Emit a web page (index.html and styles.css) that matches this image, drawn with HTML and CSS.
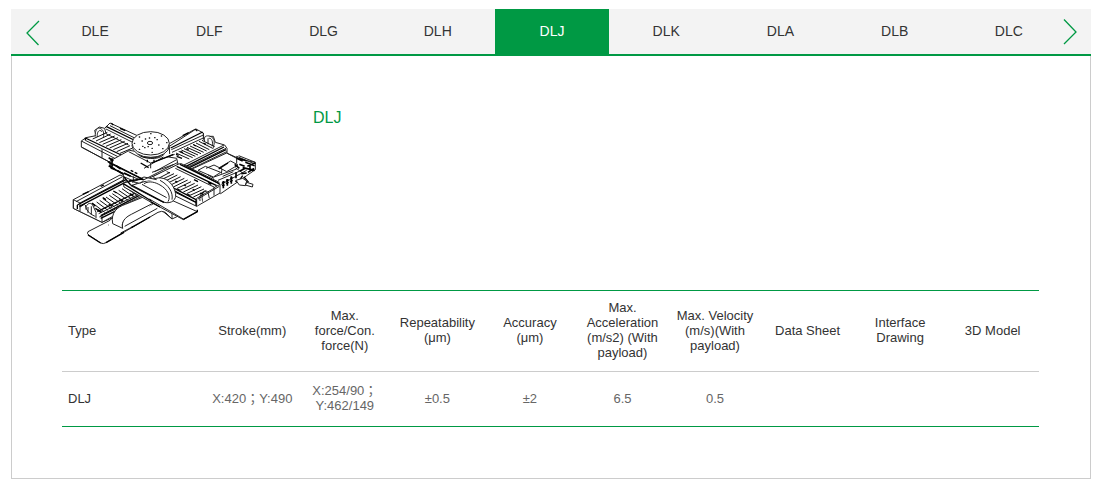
FILE: index.html
```
<!DOCTYPE html>
<html lang="en">
<head>
    <meta charset="UTF-8">
    <meta name="viewport" content="width=device-width, initial-scale=1.0">
    <title>DLJ</title>
    <link rel="stylesheet" href="styles.css">
</head>
<body>
    <!-- Series tabs -->
    <nav class="series-nav">
        <button type="button" class="arrow prev" aria-label="Previous">
            <svg width="16" height="28" viewBox="0 0 16 28"><path d="M14 3L2 15L13.500 27"/></svg>
        </button>
        <ul class="tabs">
            <li><a href="#dle">DLE</a></li>
            <li><a href="#dlf">DLF</a></li>
            <li><a href="#dlg">DLG</a></li>
            <li><a href="#dlh">DLH</a></li>
            <li><a href="#dlj" class="active">DLJ</a></li>
            <li><a href="#dlk">DLK</a></li>
            <li><a href="#dla">DLA</a></li>
            <li><a href="#dlb">DLB</a></li>
            <li><a href="#dlc">DLC</a></li>
        </ul>
        <button type="button" class="arrow next" aria-label="Next">
            <svg width="16" height="28" viewBox="0 0 16 28"><path d="M2 1.500L14 14L2 26"/></svg>
        </button>
    </nav>

    <main class="panel" id="dlj">
        <div class="product">
            <svg class="drawing" viewBox="6 0 630 450" role="img" aria-label="DLJ stage">
                <!-- upper left rail -->
                <path d="M64 108L78 98L108 92L104 76L118 66L134 70L150 54L232 92L260 150L180 195L150 172L64 126Z"/>
                <path d="M64 108L168 162M64 126L150 172M76 106L180 158M150 62L226 100M138 72L218 112M134 70L138 86L206 120M106 94C104 72 116 64 124 72C132 78 132 88 130 98M112 96C110 78 120 72 126 80M126 132V158M150 172V186"/>
                <path class="dark" d="M76 99L190 153M138 64L222 105M154 55L160 60M180 70L196 77M76 98V106"/>
                <path class="thin" d="M98 102L142 82M108 108L152 87M118 113L164 93M128 118L174 98M138 124L184 104M149 129L194 109M160 134L204 115M170 140L210 122M180 145L216 130"/>
                <!-- upper right rail -->
                <path d="M328 124L408 72L430 84L432 104L444 94L460 94L466 112L494 120L501 130V144L396 198L330 170Z"/>
                <path d="M328 116L406 72M334 134L430 90M336 142L432 98M430 84V104M372 180L492 120M384 186L498 130M392 192L500 140M434 108C430 94 440 90 450 94C464 98 466 112 458 132M446 100C456 98 460 112 456 124M444 100V118"/>
                <path class="dark" d="M332 129L428 81M388 188L498 134M368 92L386 83M406 73L412 78M378 184L492 126M350 154L366 160"/>
                <path class="thin" d="M348 144L388 162M356 139L398 158M364 135L406 154M372 131L414 150M381 127L423 146M390 123L431 142M399 118L440 138M408 114L448 134M417 109L456 129M426 106L464 125"/>
                <path class="dark" d="M348 148L356 151M361 139L369 143M379 131L386 134M401 120L408 123M430 114L438 118"/>
                <!-- connector side -->
                <path d="M392 194L500 144L544 164L586 172V194L560 212L482 266L410 230Z"/>
                <path d="M500 144L530 160M414 196L436 184L482 202L460 216ZM438 190L462 180L486 192L484 206M478 188L512 168L534 180L500 200ZM462 216L530 192M474 226L540 198M484 238L560 196M530 154L582 176M530 154V176M536 152L586 172M526 188L548 204M488 214L520 200M444 210L462 220"/>
                <path class="heavy" d="M556 172L584 182M562 184L586 174M548 188L584 196M538 178L554 184M564 202L582 190M540 198L556 190M490 228V250M502 222V242M514 214V236M528 202V220M524 178L538 190M530 160L548 168M570 176V200M544 206L560 204"/>
                <path class="dark" d="M486 234L494 230M486 242L494 240M498 226L506 224M498 236L506 232M510 220L518 218M510 230L518 226M538 160L560 168M476 192L504 174M548 212L534 232M526 228L560 240M552 216L566 232"/>
                <path d="M528 226L548 220L560 228L556 242L538 240ZM560 232L579 238L577 246L556 240Z"/>
                <!-- lower right rail -->
                <path d="M280 214L348 178L364 176L480 238V264L410 304L300 250Z"/>
                <path d="M346 190L462 246M372 180L478 232M320 200L330 204M462 246V272M480 238L462 248M410 304V280L462 250M414 282L478 244M420 288C416 264 436 250 444 262L448 280M432 262C424 264 426 280 428 290M300 240L408 292"/>
                <path class="dark" d="M350 184L470 242M360 178L478 236M300 228L408 284M302 236L408 292M408 284V302M402 224L414 230M444 232L454 238"/>
                <path class="thin" d="M292 222L330 202M300 226L342 206M310 231L352 210M320 236L362 215M330 241L373 220M340 246L383 225M350 251L393 230M360 256L404 235M370 261L414 240M380 266L424 245M390 271L432 252M400 276L438 258"/>
                <path class="dark" d="M346 228L352 232M372 240L378 243M398 253L404 256M352 252L360 256M382 268L390 271M420 264L430 268"/>
                <!-- lower left rail -->
                <path d="M40 284L180 210L270 250L280 284L126 352L40 310Z"/>
                <path d="M40 284L60 294V318M40 284V310M48 290L186 216M60 294L192 224M60 306L76 296M76 300C78 322 100 332 106 334M78 314C76 296 92 290 98 300L108 322V340M84 306V324M94 304V330M116 326L240 266M118 336L244 274M126 330V352M40 310L126 352L238 290"/>
                <path class="dark" d="M52 300L198 224M58 304L200 230M68 268L86 260M122 244L132 240M112 320L238 258M122 332L244 268M96 294L106 304M122 340L244 280M52 300V312M106 310L124 322"/>
                <path class="thin" d="M100 296L134 322M110 291L144 316M119 286L154 311M129 281L164 306M138 276L174 301M148 271L184 296M157 266L194 291M167 261L204 286M176 256L213 281M186 251L222 276M195 246L231 271M204 242L240 266"/>
                <path class="dark" d="M128 278L138 284M160 258L170 264M192 242L202 248M114 314L124 322M146 298L156 304M178 284L188 290M210 266L220 272"/>
                <!-- cable trays -->
                <path d="M310 320L336 342L370 326L340 300Z"/>
                <path d="M150 346L84 380Q80 386 86 390L122 414Q130 418 138 413L294 322Q304 316 316 322L336 342V326L290 290L190 300Z"/>
                <path d="M158 356C152 322 172 306 196 298L250 276L288 292L218 330C190 344 184 352 188 370Z"/>
                <path d="M188 370C184 350 194 338 214 328L284 292M194 364L292 310M182 384L220 364"/>
                <path class="dark" d="M84 390L122 414M138 413L192 382M214 368L270 336M146 360H147M184 385H185"/>
                <path d="M190 234L216 228L300 270L412 320L370 344L270 290L192 246Z"/>
                <path d="M232 236L288 220C330 210 352 260 346 278C340 294 322 296 306 290L212 242Z"/>
                <path d="M252 236C268 226 286 232 300 240C322 252 334 274 324 290M246 238L320 278M300 226C326 240 340 262 336 284M268 282L370 342"/>
                <path class="dark" d="M190 236L274 288M214 240L312 292M272 290L300 306M370 343L412 320V314M192 216L212 240"/>
                <!-- carriage -->
                <path d="M150 168L208 136L350 160L354 178L250 228L152 190Z"/>
                <path d="M158 176L252 224L354 172M206 140L272 174L344 148M272 174V190M252 190L310 156M284 200L350 164M250 226L240 236M216 232L252 216L290 224M276 202L342 178M190 206V232M220 214V232"/>
                <path class="heavy" d="M146 158L160 168M144 170L160 180M146 182L164 192M156 160V192M168 182L182 192M172 196L188 206M192 204L212 214"/>
                <path class="dark" d="M158 178L250 224M212 196L220 200M224 202L232 206M242 174L266 188M276 174L340 148M160 190L190 208M206 228L246 222"/>
                <!-- round table -->
                <path d="M232 136V146C244 162 296 168 312 148V136Z"/>
                <path class="dark" d="M236 146C250 160 292 162 308 146M262 164V172M282 164V170"/>
                <ellipse cx="272" cy="122" rx="56" ry="35"/>
                <ellipse cx="272" cy="115" rx="56" ry="35"/>
                <ellipse cx="270" cy="114" rx="8" ry="5"/>
                <path class="holes" d="M272 86h1M304 93h1M320 113h1M308 131h1M276 142h1M238 133h1M223 115h1M238 96h1M268 99h1M291 104h1M296 120h1M276 130h1M248 124h1M246 108h1M256 102h1M284 98h1M264 125h1M254 128h1"/>
            </svg>
            <h1>DLJ</h1>
        </div>

        <table class="spec">
            <thead>
                <tr>
                    <th class="type">Type</th>
                    <th>Stroke(mm)</th>
                    <th>Max. force/Con. force(N)</th>
                    <th>Repeatability (μm)</th>
                    <th>Accuracy (μm)</th>
                    <th>Max. Acceleration (m/s2) (With payload)</th>
                    <th>Max. Velocity (m/s)(With payload)</th>
                    <th>Data Sheet</th>
                    <th>Interface Drawing</th>
                    <th>3D Model</th>
                </tr>
            </thead>
            <tbody>
                <tr>
                    <td class="type">DLJ</td>
                    <td>X:420；Y:490</td>
                    <td>X:254/90；<br>Y:462/149</td>
                    <td>±0.5</td>
                    <td>±2</td>
                    <td>6.5</td>
                    <td>0.5</td>
                    <td></td>
                    <td></td>
                    <td></td>
                </tr>
            </tbody>
        </table>
    </main>
</body>
</html>
```
FILE: styles.css
```
* {
    box-sizing: border-box;
}

body {
    margin: 9px 10px 7px 11px;
    background-color: #fff;
    color: #333;
    font-family: "Liberation Sans", Arial, "Noto Sans CJK TC", sans-serif;
    font-size: 13px;
    line-height: 15px;
}

.series-nav {
    position: relative;
    padding: 0 25px 0 27px;
    background-color: #f3f3f3;
    border-bottom: 2px solid #009944;
}

.tabs {
    display: flex;
    margin: 0;
    padding: 0;
    list-style: none;
}

.tabs li {
    flex: 1;
}

.tabs a {
    display: block;
    color: #333;
    font-size: 14px;
    line-height: 45px;
    text-align: center;
    text-decoration: none;
}

.tabs a.active,
.tabs a:hover {
    background-color: #009944;
    color: #fff;
}

.arrow {
    position: absolute;
    top: 9px;
    padding: 0;
    border: none;
    background: none;
    cursor: pointer;
}

.arrow svg {
    display: block;
    fill: none;
    stroke: #009944;
    stroke-width: 1.3;
}

.prev {
    left: 14px;
}

.next {
    right: 13px;
}

.panel {
    padding: 49px 51px 51px 50px;
    border: 1px solid #ccc;
    border-top: none;
}

.product {
    display: flex;
    gap: 41px;
    margin-bottom: 35px;
}

.product h1 {
    margin: 0;
    color: #009944;
    font-size: 16px;
    font-weight: normal;
    line-height: 26px;
}

.drawing {
    width: 210px;
    height: 150px;
    fill: #fff;
    stroke: #222;
    stroke-width: 3;
    stroke-linejoin: round;
}

.drawing .thin {
    stroke: #111;
    stroke-width: 3;
}

.drawing .dark {
    stroke: #000;
    stroke-width: 4;
    fill: none;
}

.drawing .heavy {
    stroke: #000;
    stroke-width: 5;
}

.drawing .holes {
    stroke: #111;
    stroke-width: 4;
    stroke-linecap: round;
}

.spec {
    width: 100%;
    table-layout: fixed;
    border-collapse: collapse;
    border-top: 1px solid #009944;
    border-bottom: 1px solid #009944;
}

.spec th,
.spec td {
    padding: 9px 5px 11px;
    font-weight: normal;
    text-align: center;
    vertical-align: middle;
}

.spec th {
    height: 81px;
    border-bottom: 1px solid #ccc;
}

.spec td {
    height: 55px;
    color: #666;
}

.spec .type {
    width: 144px;
    padding-left: 6px;
    color: #333;
    text-align: left;
}
```
